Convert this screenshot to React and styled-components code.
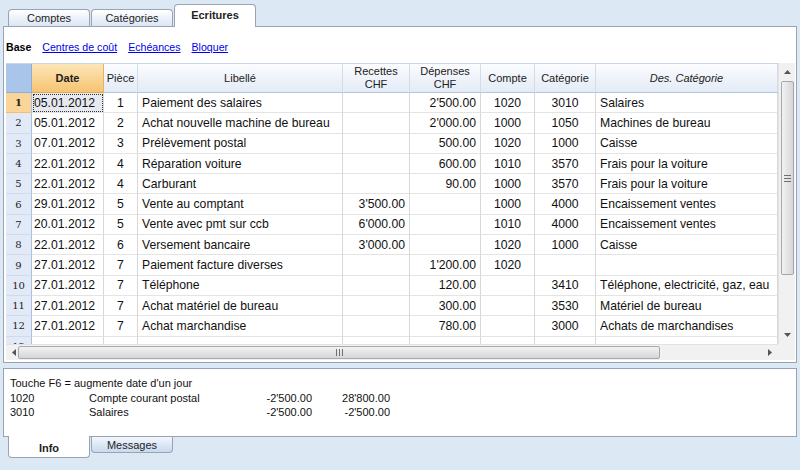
import React from "react"
import styled, { createGlobalStyle } from "styled-components"

const GlobalStyle = createGlobalStyle`
  body {
    margin: 0;
    font-family: "Liberation Sans", Arial, sans-serif;
  }
`

const COLS = "26px 72px 34px 205px 67px 71px 54px 61px 182px"

const rows = [
  ["05.01.2012", "1", "Paiement des salaires", "", "2'500.00", "1020", "3010", "Salaires"],
  ["05.01.2012", "2", "Achat nouvelle machine de bureau", "", "2'000.00", "1000", "1050", "Machines de bureau"],
  ["07.01.2012", "3", "Prélèvement postal", "", "500.00", "1020", "1000", "Caisse"],
  ["22.01.2012", "4", "Réparation voiture", "", "600.00", "1010", "3570", "Frais pour la voiture"],
  ["22.01.2012", "4", "Carburant", "", "90.00", "1000", "3570", "Frais pour la voiture"],
  ["29.01.2012", "5", "Vente au comptant", "3'500.00", "", "1000", "4000", "Encaissement ventes"],
  ["20.01.2012", "5", "Vente avec pmt sur ccb", "6'000.00", "", "1010", "4000", "Encaissement ventes"],
  ["22.01.2012", "6", "Versement bancaire", "3'000.00", "", "1020", "1000", "Caisse"],
  ["27.01.2012", "7", "Paiement facture diverses", "", "1'200.00", "1020", "", ""],
  ["27.01.2012", "7", "Téléphone", "", "120.00", "", "3410", "Téléphone, electricité, gaz, eau"],
  ["27.01.2012", "7", "Achat matériel de bureau", "", "300.00", "", "3530", "Matériel de bureau"],
  ["27.01.2012", "7", "Achat marchandise", "", "780.00", "", "3000", "Achats de marchandises"],
  ["", "", "", "", "", "", "", ""],
]

// alignment of each data column
const ALIGN = ["left", "center", "left", "right", "right", "center", "center", "left"]

const Screen = styled.div`
  width: 800px;
  height: 470px;
  background: #dde8f5;
  overflow: hidden;
  display: flex;
  flex-direction: column;
`

const TabStrip = styled.div`
  display: flex;
  align-items: flex-end;
  gap: 1px;
  height: 26px;
  padding-left: 8px;
`

const Tab = styled.div`
  position: relative;
  z-index: 1;
  width: 82px;
  box-sizing: border-box;
  height: ${({ $active }) => ($active ? "23px" : "17px")};
  margin-bottom: ${({ $active }) => ($active ? "-1px" : "0")};
  border: 1px solid #98a4b4;
  border-bottom: none;
  border-radius: 4px 4px 0 0;
  background: ${({ $active }) =>
    $active ? "#fff" : "linear-gradient(#ffffff, #dbe6f3)"};
  display: flex;
  align-items: center;
  justify-content: center;
  padding-bottom: ${({ $active }) => ($active ? "3px" : "0")};
  font-size: 11px;
  font-weight: ${({ $active }) => ($active ? "bold" : "normal")};
  color: #1e1e1e;
`

const MainPanel = styled.div`
  margin: 0 3px;
  height: 337px;
  box-sizing: border-box;
  background: #fff;
  border: 1px solid #98a4b4;
  display: flex;
  flex-direction: column;
  padding: 0 1px 0 2px;
`

const SubNav = styled.div`
  height: 36px;
  display: flex;
  align-items: center;
  gap: 11px;
  padding: 4px 0 0 0;
  box-sizing: border-box;
  font-size: 10.6px;
`

const NavItem = styled.span`
  color: ${({ $current }) => ($current ? "#000" : "#0000ee")};
  font-weight: ${({ $current }) => ($current ? "bold" : "normal")};
  text-decoration: ${({ $current }) => ($current ? "none" : "underline")};
`

const GridFrame = styled.div`
  display: grid;
  grid-template-columns: 772px 17px;
  grid-template-rows: 281px 16px;
`

const Viewport = styled.div`
  overflow: hidden;
  border-top: 1px solid #c9d5e4;
  box-sizing: border-box;
`

const Row = styled.div`
  display: grid;
  grid-template-columns: ${COLS};
  height: ${({ $head }) => ($head ? "29px" : "20.3px")};
`

const HeadCell = styled.div`
  box-sizing: border-box;
  display: flex;
  align-items: center;
  justify-content: center;
  text-align: center;
  line-height: 13px;
  font-size: 11px;
  color: #222;
  font-weight: ${({ $sel }) => ($sel ? "bold" : "normal")};
  font-style: ${({ $italic }) => ($italic ? "italic" : "normal")};
  background: ${({ $sel }) =>
    $sel ? "linear-gradient(#fce6b8, #f6c472)" : "linear-gradient(#fbfcfe, #e3ebf6)"};
  border-right: 1px solid ${({ $sel }) => ($sel ? "#e2b465" : "#d3dce8")};
  border-bottom: 1px solid ${({ $sel }) => ($sel ? "#e0a94f" : "#b4c6dd")};
`

const CornerCell = styled.div`
  background: #a9c5ea;
  border-right: 1px solid #8fadd6;
  border-bottom: 1px solid #8fadd6;
`

const NumCell = styled.div`
  box-sizing: border-box;
  display: flex;
  align-items: center;
  justify-content: center;
  font-family: "DejaVu Serif", "Liberation Serif", serif;
  font-size: 10px;
  font-weight: ${({ $sel }) => ($sel ? "bold" : "normal")};
  color: #222;
  background: ${({ $sel }) => ($sel ? "#fbd597" : "#e1eaf6")};
  border-right: 1px solid #a9c0de;
  border-bottom: 1px solid ${({ $sel }) => ($sel ? "#f0c070" : "#cfdbea")};
`

const Cell = styled.div`
  box-sizing: border-box;
  display: flex;
  align-items: center;
  justify-content: ${({ $align }) =>
    $align === "right" ? "flex-end" : $align === "center" ? "center" : "flex-start"};
  padding: 0 ${({ $align }) => ($align === "center" ? "0" : "4px")};
  font-size: 12.2px;
  color: #111;
  white-space: nowrap;
  overflow: hidden;
  background: ${({ $focus }) => ($focus ? "#e7e9f0" : "#fff")};
  outline: ${({ $focus }) => ($focus ? "1px dotted #333" : "none")};
  outline-offset: -2px;
  border-right: 1px solid #d8d8d8;
  border-bottom: 1px solid #e4e4e4;
`

const DateCell = styled(Cell)`
  padding-left: 2px;
`

const VScroll = styled.div`
  background: #f1f1f1;
  border-left: 1px solid #e2e2e2;
  display: flex;
  flex-direction: column;
  align-items: center;
`

const HScroll = styled.div`
  background: #f1f1f1;
  border-top: 1px solid #e2e2e2;
  display: flex;
  align-items: center;
`

const Corner = styled.div`
  background: #f1f1f1;
`

const ArrowBox = styled.div`
  width: ${({ $vertical }) => ($vertical ? "17px" : "16px")};
  height: ${({ $vertical }) => ($vertical ? "18px" : "15px")};
  flex-shrink: 0;
  display: flex;
  align-items: center;
  justify-content: center;
`

const VThumb = styled.div`
  width: 13px;
  height: 194px;
  box-sizing: border-box;
  border: 1px solid #a2a9b2;
  border-radius: 2px;
  background: linear-gradient(90deg, #f2f2f2, #d6d6d6);
  display: flex;
  align-items: center;
  justify-content: center;
`

const HThumb = styled.div`
  width: 642px;
  height: 13px;
  margin-left: -4px;
  box-sizing: border-box;
  border: 1px solid #a2a9b2;
  border-radius: 2px;
  background: linear-gradient(#f2f2f2, #d6d6d6);
  display: flex;
  align-items: center;
  justify-content: center;
`

const Spacer = styled.div`
  flex: 1;
`

const Grip = ({ vertical }) => (
  <svg width="7" height="7" viewBox="0 0 7 7">
    {[0, 3, 6].map((p) =>
      vertical ? (
        <line key={p} x1="0" y1={p + 0.5} x2="7" y2={p + 0.5} stroke="#6f6f6f" strokeWidth="1" />
      ) : (
        <line key={p} x1={p + 0.5} y1="0" x2={p + 0.5} y2="7" stroke="#6f6f6f" strokeWidth="1" />
      )
    )}
  </svg>
)

const Arrow = ({ dir }) => {
  const pts = {
    up: "0,4 3.5,0 7,4",
    down: "0,0 3.5,4 7,0",
    left: "4,0 0,3.5 4,7",
    right: "0,0 4,3.5 0,7",
  }[dir]
  const vert = dir === "up" || dir === "down"
  return (
    <svg width={vert ? 7 : 4} height={vert ? 4 : 7} viewBox={vert ? "0 0 7 4" : "0 0 4 7"}>
      <polygon points={pts} fill="#555" />
    </svg>
  )
}

const InfoPanel = styled.div`
  margin: 5px 3px 0;
  height: 69px;
  box-sizing: border-box;
  background: #fff;
  border: 1px solid #98a4b4;
  padding: 7px 0 0 6px;
  font-size: 11px;
  line-height: 14.5px;
  color: #111;
`

const InfoLine = styled.div`
  display: grid;
  grid-template-columns: 79px 150px 73px 78px;
`

const Num = styled.span`
  text-align: right;
`

const BottomStrip = styled.div`
  display: flex;
  align-items: flex-start;
  gap: 1px;
  padding-left: 8px;
`

const BottomTab = styled.div`
  position: relative;
  z-index: 1;
  width: 82px;
  box-sizing: border-box;
  height: ${({ $active }) => ($active ? "22px" : "16px")};
  margin-top: ${({ $active }) => ($active ? "-1px" : "0")};
  border: 1px solid #98a4b4;
  border-top: none;
  border-radius: 0 0 4px 4px;
  background: ${({ $active }) =>
    $active ? "#fff" : "linear-gradient(#f3f7fc, #c8d9ef)"};
  display: flex;
  align-items: center;
  justify-content: center;
  padding-top: ${({ $active }) => ($active ? "3px" : "0")};
  font-size: 11px;
  font-weight: ${({ $active }) => ($active ? "bold" : "normal")};
  color: #1e1e1e;
`

export default function App() {
  return (
    <Screen>
      <GlobalStyle />
      <TabStrip>
        <Tab>Comptes</Tab>
        <Tab>Catégories</Tab>
        <Tab $active>Ecritures</Tab>
      </TabStrip>
      <MainPanel>
        <SubNav>
          <NavItem $current>Base</NavItem>
          <NavItem>Centres de coût</NavItem>
          <NavItem>Echéances</NavItem>
          <NavItem>Bloquer</NavItem>
        </SubNav>
        <GridFrame>
          <Viewport>
            <Row $head>
              <CornerCell />
              <HeadCell $sel>Date</HeadCell>
              <HeadCell>Pièce</HeadCell>
              <HeadCell>Libellé</HeadCell>
              <HeadCell>
                Recettes
                <br />
                CHF
              </HeadCell>
              <HeadCell>
                Dépenses
                <br />
                CHF
              </HeadCell>
              <HeadCell>Compte</HeadCell>
              <HeadCell>Catégorie</HeadCell>
              <HeadCell $italic>Des. Catégorie</HeadCell>
            </Row>
            {rows.map((r, i) => (
              <Row key={i}>
                <NumCell $sel={i === 0}>{i + 1}</NumCell>
                <DateCell $focus={i === 0}>{r[0]}</DateCell>
                {r.slice(1).map((v, j) => (
                  <Cell key={j} $align={ALIGN[j + 1]}>
                    {v}
                  </Cell>
                ))}
              </Row>
            ))}
          </Viewport>
          <VScroll>
            <ArrowBox $vertical>
              <Arrow dir="up" />
            </ArrowBox>
            <VThumb>
              <Grip vertical />
            </VThumb>
            <Spacer />
            <ArrowBox $vertical>
              <Arrow dir="down" />
            </ArrowBox>
          </VScroll>
          <HScroll>
            <ArrowBox>
              <Arrow dir="left" />
            </ArrowBox>
            <HThumb>
              <Grip />
            </HThumb>
            <Spacer />
            <ArrowBox>
              <Arrow dir="right" />
            </ArrowBox>
          </HScroll>
          <Corner />
        </GridFrame>
      </MainPanel>
      <InfoPanel>
        <div>Touche F6 = augmente date d'un jour</div>
        <InfoLine>
          <span>1020</span>
          <span>Compte courant postal</span>
          <Num>-2'500.00</Num>
          <Num>28'800.00</Num>
        </InfoLine>
        <InfoLine>
          <span>3010</span>
          <span>Salaires</span>
          <Num>-2'500.00</Num>
          <Num>-2'500.00</Num>
        </InfoLine>
      </InfoPanel>
      <BottomStrip>
        <BottomTab $active>Info</BottomTab>
        <BottomTab>Messages</BottomTab>
      </BottomStrip>
    </Screen>
  )
}
